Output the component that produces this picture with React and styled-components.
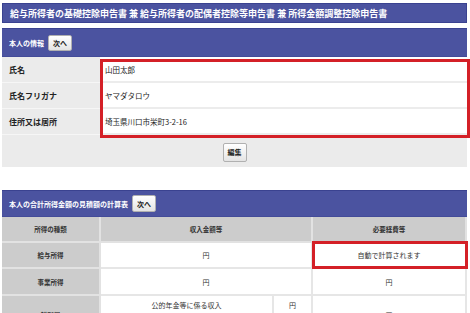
import React from "react";
import styled, { createGlobalStyle } from "styled-components";

const Global = createGlobalStyle`
  html, body { margin: 0; padding: 0; background: #fff; }
  body { font-family: "Noto Sans CJK JP", "Noto Sans", sans-serif; color: #222; }
  * { box-sizing: border-box; }
`;

const Page = styled.div`
  padding: 3px 3px 0 2px;
`;

const TitleBar = styled.div`
  height: 20px;
  background: #4b53a0;
  border: 1px solid #3a4290;
  color: #fff;
  font-size: 9px;
  font-weight: 700;
  display: flex;
  align-items: center;
  padding-left: 7px;
  white-space: nowrap;
`;

const Section = styled.section`
  position: relative;
  margin-top: ${(p) => p.$gap}px;
`;

const SectionHeader = styled.div`
  height: ${(p) => p.$h}px;
  background: #4b53a0;
  border-top: 1px solid #3a4290;
  border-bottom: 1px solid #434b99;
  color: #fff;
  font-size: 7px;
  font-weight: 700;
  display: flex;
  align-items: center;
  gap: 4px;
  padding-left: 7px;
`;

const SmallButton = styled.button`
  height: ${(p) => p.$h || 16}px;
  width: ${(p) => p.$w || 24}px;
  padding: 0;
  font-family: inherit;
  font-size: 7px;
  font-weight: 700;
  color: #222;
  background: linear-gradient(#ffffff, #e4e4e4);
  border: 1px solid #b0b0b0;
  border-radius: 2px;
  display: flex;
  align-items: center;
  justify-content: center;
`;

const InfoGrid = styled.div`
  display: grid;
  grid-template-columns: 98px 1fr;
  grid-auto-rows: 26px;
`;

const InfoLabel = styled.div`
  background: #ebebeb;
  border-bottom: 1px solid #f6f6f6;
  font-size: 8px;
  font-weight: 700;
  display: flex;
  align-items: center;
  padding-left: 7px;
`;

const InfoValue = styled.div`
  background: #fff;
  border-bottom: 2px solid #ececec;
  font-size: 7.5px;
  display: flex;
  align-items: center;
  padding-left: 5px;
`;

const ButtonRow = styled.div`
  height: 32px;
  background: #ebebeb;
  display: flex;
  align-items: center;
  justify-content: center;
  padding-top: 2px;
`;

const RedBox = styled.div`
  position: absolute;
  border: 3px solid #d42027;
  left: ${(p) => p.$l}px;
  top: ${(p) => p.$t}px;
  width: ${(p) => p.$w}px;
  height: ${(p) => p.$h}px;
  pointer-events: none;
`;

const CalcGrid = styled.div`
  display: grid;
  grid-template-columns: 99px 173px 39px 1fr;
  grid-template-rows: 26px 26px 27px 20px 20px;
`;

const Cell = styled.div`
  background: ${(p) => (p.$gray ? "#cccccc" : "#fff")};
  border-right: 2px solid ${(p) => (p.$gray ? "#e2e2e2" : "#e6e6e6")};
  border-bottom: 2px solid ${(p) => (p.$gray ? "#e2e2e2" : "#e6e6e6")};
  font-size: ${(p) => (p.$bold ? 6.5 : 7)}px;
  font-weight: ${(p) => (p.$bold ? 700 : 400)};
  color: #333;
  display: flex;
  align-items: center;
  justify-content: center;
  grid-column: ${(p) => p.$col || "auto"};
  grid-row: ${(p) => p.$row || "auto"};
  white-space: nowrap;
`;

export default function App() {
  return (
    <>
      <Global />
      <Page>
        <TitleBar>
          給与所得者の基礎控除申告書 兼 給与所得者の配偶者控除等申告書 兼 所得金額調整控除申告書
        </TitleBar>

        <Section $gap={5}>
          <SectionHeader $h={29}>
            本人の情報
            <SmallButton>次へ</SmallButton>
          </SectionHeader>
          <InfoGrid>
            <InfoLabel>氏名</InfoLabel>
            <InfoValue>山田太郎</InfoValue>
            <InfoLabel>氏名フリガナ</InfoLabel>
            <InfoValue>ヤマダタロウ</InfoValue>
            <InfoLabel>住所又は居所</InfoLabel>
            <InfoValue>埼玉県川口市栄町3-2-16</InfoValue>
          </InfoGrid>
          <ButtonRow>
            <SmallButton $h={19} $w={24}>編集</SmallButton>
          </ButtonRow>
          <RedBox $l={98} $t={31} $w={370} $h={79} />
        </Section>

        <Section $gap={23}>
          <SectionHeader $h={27}>
            本人の合計所得金額の見積額の計算表
            <SmallButton $h={17}>次へ</SmallButton>
          </SectionHeader>
          <CalcGrid>
            <Cell $gray $bold>所得の種類</Cell>
            <Cell $gray $bold $col="span 2">収入金額等</Cell>
            <Cell $gray $bold>必要経費等</Cell>

            <Cell $gray $bold>給与所得</Cell>
            <Cell $col="span 2">円</Cell>
            <Cell>自動で計算されます</Cell>

            <Cell $gray $bold>事業所得</Cell>
            <Cell $col="span 2">円</Cell>
            <Cell>円</Cell>

            <Cell $gray $bold $row="span 2">雑所得</Cell>
            <Cell>公的年金等に係る収入</Cell>
            <Cell>円</Cell>
            <Cell $row="span 2">円</Cell>
            <Cell>公的年金等以外の収入</Cell>
            <Cell>円</Cell>
          </CalcGrid>
          <RedBox $l={310} $t={51} $w={156} $h={28} />
        </Section>
      </Page>
    </>
  );
}
